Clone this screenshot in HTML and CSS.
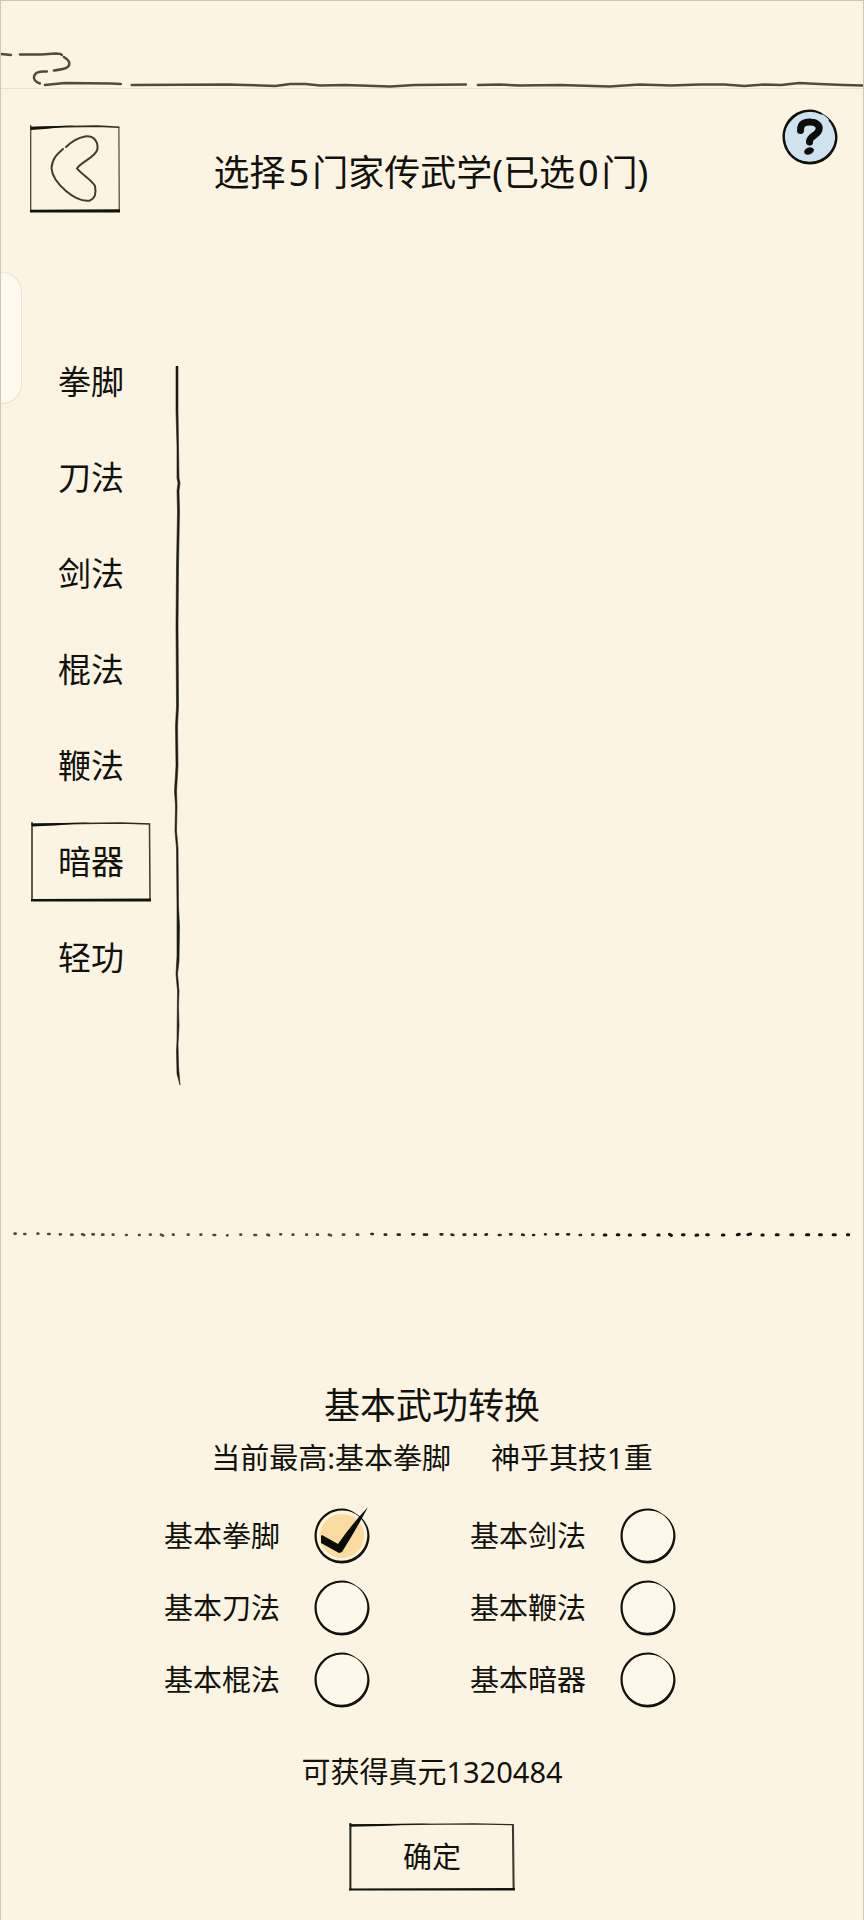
FILE: index.html
```html
<!DOCTYPE html>
<html lang="zh-CN">
<head>
    <meta charset="UTF-8">
    <meta name="viewport" content="width=device-width, initial-scale=1.0">
    <title>家传武学</title>
    <link rel="stylesheet" href="styles.css">
</head>
<body>
    <!-- shared ink shapes -->
    <svg class="defs" aria-hidden="true">
        <symbol id="frame" viewBox="0 0 120 80" preserveAspectRatio="none">
            <path d="M1 0V79M1 2.500L50 1.5L90 1L119 2" fill="none" stroke="#2b2b22" stroke-width="1.500"/>
            <path d="M118.500 1.500L119 77" fill="none" stroke="#3a3a31" stroke-width="1.500"/>
            <path d="M0 1.500L60 0.500L24 3.500L1 4.500Z" fill="#11140c"/>
            <path d="M0 77L120 76.500V79.500L0 79.500Z" fill="#11140c"/>
        </symbol>
        <symbol id="ring" viewBox="0 0 56 56">
            <path fill-rule="evenodd" d="M28 0.500C12 0.500 0.500 13 0.500 28S13 55.500 28 55.500S55.500 43 55.500 28C55.500 19 50 10 42 5.500C37 2 33 0.500 28 0.500ZM28 2.500C33 2.500 37 3.500 42 6.200C49 11 53.300 19 53.300 27C53.300 41 42 52.700 27.500 52.700S2.700 41 2.700 27.500S14 2.500 28 2.500Z" fill="#11120c"/>
        </symbol>
    </svg>

    <div class="handle"></div>

    <svg class="cloud-line" viewBox="0 0 864 87" preserveAspectRatio="none" fill="none" stroke="#4f4b41" stroke-width="2.500" stroke-linecap="round" stroke-linejoin="round" aria-hidden="true">
        <path d="M0 53L10 54M19 53.500L40 53.500L55 52.500Q60 52.500 61 54M63 56C70 60 71 66 62 68Q57 69 53 69.500M46 70.500C39 70 33 71 33 77Q34 81 39 82.500"/>
        <path d="M44 84L64 82L110 82.500L120 83M131 84L228 83.500L245 84L275 85L290 83L305 83L320 84.500L345 84L390 85.500L415 84L466 83.500"/>
        <path d="M478 84L500 83.500L520 84.500L560 84L610 85.500L640 83.500L672 84.500L700 83.500L725 83.500L745 85L765 83.500L782 84L800 82L820 83L845 84L864 84.500"/>
    </svg>

    <header class="header">
        <button class="ink-button back" type="button" aria-label="返回">
            <svg class="frame" aria-hidden="true"><use href="#frame"/></svg>
            <svg class="back-icon" viewBox="0 0 50 70" fill="none" stroke="#3d3d35" stroke-width="2" stroke-linecap="round" aria-hidden="true">
                <path d="M13 15C7 20 2 25 1.500 34C2 44 9 51 16 57C23 63 31 68 40 66.500C46 64 46 57 45 52C42 46 30 39 27 34.500C31 28 46 23 47.500 15C48 6 43 1.500 35 2.500C27 4 21 8 16 13"/>
            </svg>
        </button>
        <h1 class="title">选择<span class="num">5</span>门家传武学(已选<span class="num">0</span>门)</h1>
        <button class="help" type="button" aria-label="帮助">
            <svg viewBox="0 0 56 56" aria-hidden="true">
                <circle cx="28" cy="28" r="26" fill="#cfe2f0"/>
                <use href="#ring"/>
                <path d="M40 5Q28 -1 16 5Q2 14 2 28Q3 43 15 51Q28 57 41 51Q54 42 54 28Q53 18 47 11" fill="none" stroke="#11120c" stroke-width="1.500"/>
                <path d="M18.500 21.500C18 14 24 12.500 29 13C36 13.500 39 18 36 23C33 27 27 28 27.500 33" fill="none" stroke="#0c0d0d" stroke-width="7" stroke-linecap="round" stroke-linejoin="round"/>
                <ellipse cx="27" cy="42" rx="5" ry="3.500" fill="#0c0d0d" transform="rotate(-20 27 42)"/>
            </svg>
        </button>
    </header>

    <main>
        <div class="content">
            <nav class="tabs">
                <button class="ink-button tab" type="button">拳脚</button>
                <button class="ink-button tab" type="button">刀法</button>
                <button class="ink-button tab" type="button">剑法</button>
                <button class="ink-button tab" type="button">棍法</button>
                <button class="ink-button tab" type="button">鞭法</button>
                <button class="ink-button tab" type="button" aria-current="true">
                    <svg class="frame" aria-hidden="true"><use href="#frame"/></svg>
                    <span>暗器</span>
                </button>
                <button class="ink-button tab" type="button">轻功</button>
            </nav>
            <svg class="divider" viewBox="0 0 8 719" preserveAspectRatio="none" aria-hidden="true">
                <path d="M3 0L5 0L5 45L5.500 80L6 112L7 117L6 125L6.500 145L5.500 200L5 260L5.500 340L4.500 360L5 400L3.500 425L4 440L3.500 465L5 482L5.500 540L6.500 560L6 595L4.500 608L6 625L5.500 640L6 660L5 678L5.500 700L7 719L4 708L3.500 685L4 675L4.500 625L3 608L4 590L4 540L3.500 482L2 465L2.500 440L1.500 425L3 400L2.500 360L3.500 340L3 260L3.500 200L4.500 145L4 125L5 117L4 112L4 80L3 45Z" fill="#1c1c15" stroke="#1c1c15" stroke-width="0.600"/>
            </svg>
        </div>

        <svg class="dots" viewBox="0 0 2592 36" preserveAspectRatio="none" fill="none" stroke-linecap="round" aria-hidden="true">
            <path stroke="#4b483c" stroke-width="8" d="M41 17h3M70 18h3M110 17h2M142 18h4M177 19h3M211 20h4M244 19l6 2M275 19h4M304 20h4M336 20h2M376 21h2M415 21h2M448 20h2M481 20l6 3M517 20h2M562 20h2M600 20h2M639 21h5M680 22h1M720 20h2M762 21h5M801 20l5 2M840 19h2M877 20h2M918 20h2M950 20h3M986 20l6 2M1028 20h4M1070 20h4"/>
            <path stroke="#2c2a20" stroke-width="8" d="M1114 18h4M1154 20h4M1193 20h6M1237 19h5M1272 20h9M1322 19h5M1355 20l5 1M1391 20h5M1424 20h4M1457 20l4-1M1497 21h5M1531 19h4M1567 20l5 1M1600 21h3M1636 19h2M1670 19h5M1703 19h5M1740 21h4M1778 20h3"/>
            <path stroke="#14150e" stroke-width="9" d="M1814 21h5M1853 20h5M1889 21h4M1930 20h6M1975 21h4M2010 19l6 3M2049 20h5M2090 22l5-1M2122 20h5M2169 21h5M2214 20l6-1M2246 20l8-2M2288 21h4M2331 20h6M2375 20h6M2422 20h7M2461 20h6M2502 20h7M2545 20h4"/>
        </svg>

        <form class="convert">
            <h2 class="title">基本武功转换</h2>
            <p class="best"><span>当前最高:基本拳脚</span><span>神乎其技1重</span></p>
            <div class="options">
                <label class="option">基本拳脚
                    <span class="radio">
                        <input type="radio" name="skill" value="fist" checked>
                        <svg viewBox="0 0 56 56" aria-hidden="true">
                            <use href="#ring"/>
                            <path d="M7 28L8 27L24 36Q37 17 54 -1Q43 20 28 44L25 45L7 35Z" fill="#0b0c08"/>
                        </svg>
                    </span>
                </label>
                <label class="option">基本剑法
                    <span class="radio">
                        <input type="radio" name="skill" value="sword">
                        <svg viewBox="0 0 56 56" aria-hidden="true"><use href="#ring"/></svg>
                    </span>
                </label>
                <label class="option">基本刀法
                    <span class="radio">
                        <input type="radio" name="skill" value="blade">
                        <svg viewBox="0 0 56 56" aria-hidden="true"><use href="#ring"/></svg>
                    </span>
                </label>
                <label class="option">基本鞭法
                    <span class="radio">
                        <input type="radio" name="skill" value="whip">
                        <svg viewBox="0 0 56 56" aria-hidden="true"><use href="#ring"/></svg>
                    </span>
                </label>
                <label class="option">基本棍法
                    <span class="radio">
                        <input type="radio" name="skill" value="staff">
                        <svg viewBox="0 0 56 56" aria-hidden="true"><use href="#ring"/></svg>
                    </span>
                </label>
                <label class="option">基本暗器
                    <span class="radio">
                        <input type="radio" name="skill" value="hidden">
                        <svg viewBox="0 0 56 56" aria-hidden="true"><use href="#ring"/></svg>
                    </span>
                </label>
            </div>
            <p class="reward">可获得真元1320484</p>
            <button class="ink-button confirm" type="button">
                <svg class="frame" aria-hidden="true"><use href="#frame"/></svg>
                <span>确定</span>
            </button>
        </form>
    </main>
</body>
</html>
```
FILE: styles.css
```css
* {
    margin: 0;
    padding: 0;
    box-sizing: border-box;
}

body {
    position: relative;
    min-height: 100vh;
    background-color: #fcf4e2;
    border: 1px solid #cfc8b8;
    border-bottom: none;
    color: #11120e;
    font-family: "Noto Sans", "Noto Sans CJK SC", sans-serif;
    font-size: 29px;
    line-height: 40px;
}

button {
    border: none;
    background: none;
    color: inherit;
    font: inherit;
    cursor: pointer;
}

svg {
    display: block;
}

.defs {
    position: absolute;
    width: 0;
    height: 0;
}

/* pull-out handle on the screen edge */
.handle {
    position: absolute;
    top: 271px;
    left: 0;
    width: 21px;
    height: 132px;
    background-color: #fdf9ee;
    border: 1px solid #e9e2d1;
    border-left: none;
    border-radius: 0 20px 20px 0;
}

.cloud-line {
    width: 100%;
    height: 87px;
}

.header {
    display: grid;
    grid-template-columns: 90px 1fr 96px;
    align-items: start;
    padding: 20px 25px 0 29px;
    border-top: 1px solid #e6dfce;
}

.title {
    font-size: 36px;
    font-weight: 400;
    line-height: 48px;
    text-align: center;
}

.header .title {
    margin-top: 40px;
}

.num {
    margin: 0 3px;
}

/* button content and its ink frame share one cell */
.ink-button {
    display: grid;
    place-items: center;
}

.ink-button > * {
    grid-area: 1 / 1;
}

.frame {
    width: 100%;
    height: 100%;
}

.back {
    height: 88px;
    margin-top: 16px;
}

.back-icon {
    width: 50px;
    height: 70px;
}

.help {
    justify-self: end;
    width: 56px;
    height: 56px;
}

.content {
    display: flex;
    gap: 22px;
    padding-left: 30px;
    margin-top: 129px;
}

.tabs {
    display: flex;
    flex-direction: column;
    gap: 16px;
}

.tab {
    grid-template-rows: 80px;
    grid-template-columns: 120px;
    width: 120px;
    height: 80px;
    font-size: 33px;
}

.divider {
    width: 8px;
    height: 719px;
    margin-top: 24px;
}

.dots {
    width: 100%;
    height: 12px;
    margin-top: 143px;
}

.convert {
    display: flex;
    flex-direction: column;
    align-items: center;
    margin-top: 142px;
    padding-bottom: 28px;
}

.best {
    display: flex;
    gap: 40px;
    margin-top: 8px;
}

.options {
    display: grid;
    grid-template-columns: auto auto;
    gap: 16px 100px;
    margin-top: 30px;
    padding-right: 24px;
}

.option {
    display: flex;
    align-items: center;
    gap: 34px;
}

.radio {
    display: grid;
    width: 56px;
    height: 56px;
}

.radio > * {
    grid-area: 1 / 1;
}

.radio svg {
    pointer-events: none;
    overflow: visible;
}

.radio input {
    appearance: none;
    margin: 2px;
    border-radius: 50%;
    background-color: #fdf8ea;
}

.radio input:checked {
    border: 4px solid #fdf3da;
    background-color: #fadca0;
}

.reward {
    margin-top: 44px;
}

.confirm {
    grid-template-rows: 68px;
    grid-template-columns: 166px;
    width: 166px;
    height: 68px;
    margin-top: 31px;
}
```
